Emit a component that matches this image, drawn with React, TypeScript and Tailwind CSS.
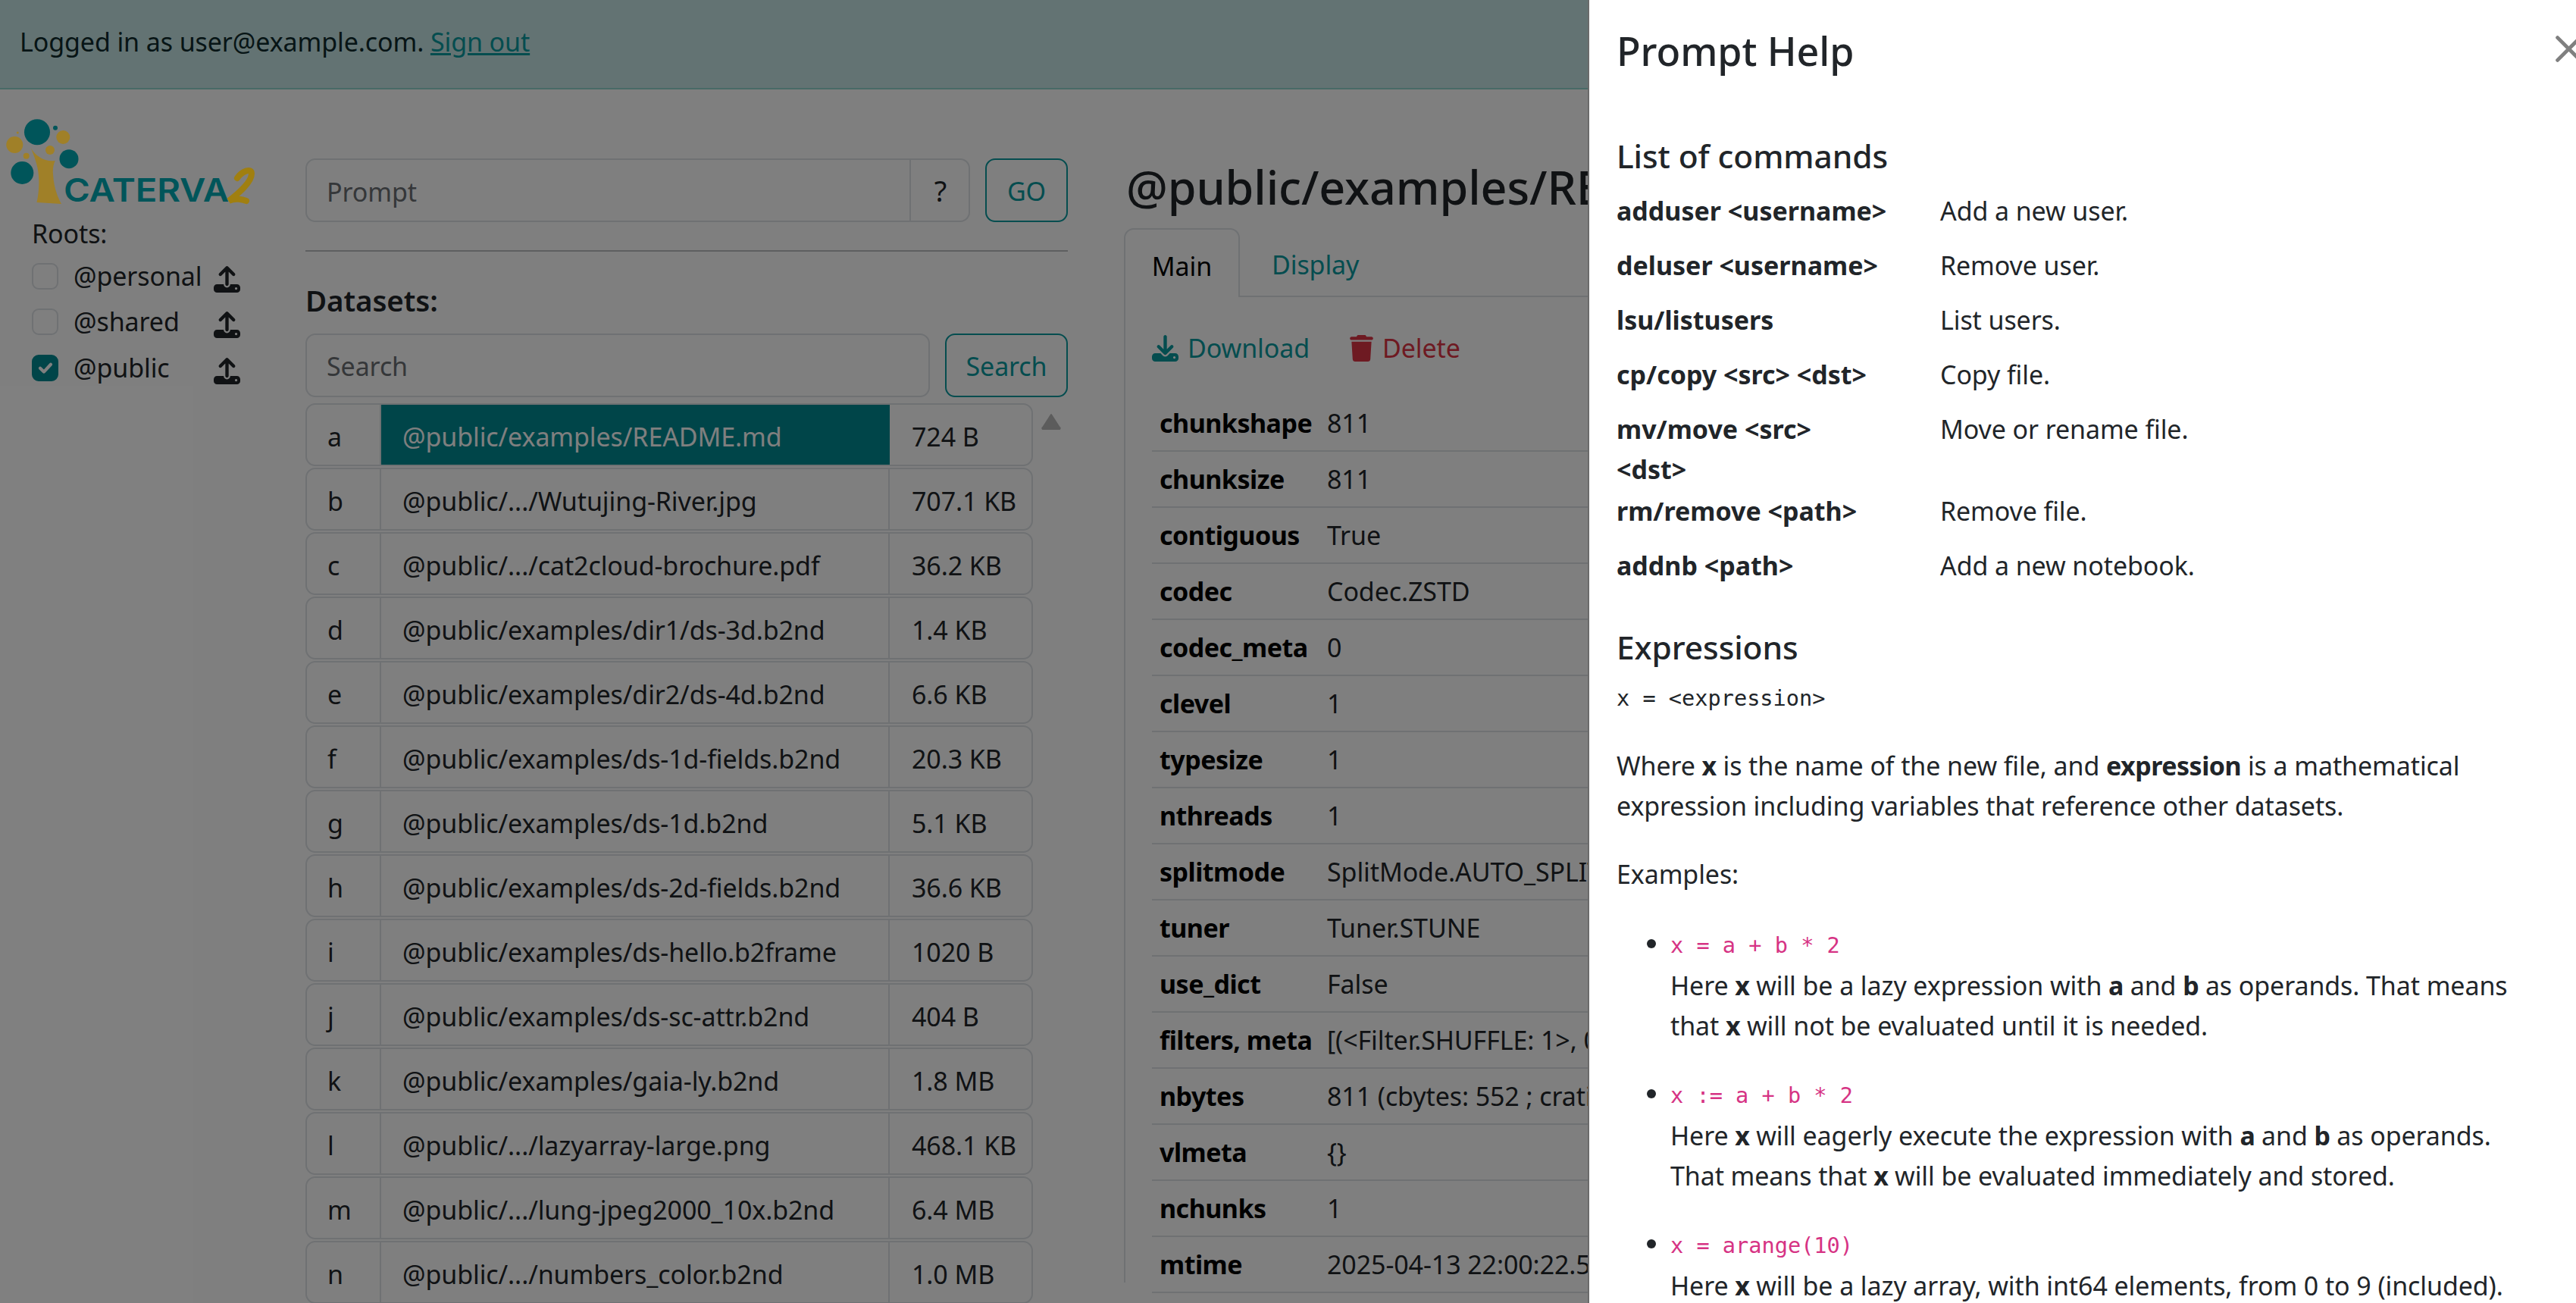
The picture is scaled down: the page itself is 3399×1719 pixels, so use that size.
import React from "react";
import { FaUpload, FaDownload, FaTrash } from "react-icons/fa6";

const rows: [string, string, string][] = [
  ["a", "@public/examples/README.md", "724 B"],
  ["b", "@public/.../Wutujing-River.jpg", "707.1 KB"],
  ["c", "@public/.../cat2cloud-brochure.pdf", "36.2 KB"],
  ["d", "@public/examples/dir1/ds-3d.b2nd", "1.4 KB"],
  ["e", "@public/examples/dir2/ds-4d.b2nd", "6.6 KB"],
  ["f", "@public/examples/ds-1d-fields.b2nd", "20.3 KB"],
  ["g", "@public/examples/ds-1d.b2nd", "5.1 KB"],
  ["h", "@public/examples/ds-2d-fields.b2nd", "36.6 KB"],
  ["i", "@public/examples/ds-hello.b2frame", "1020 B"],
  ["j", "@public/examples/ds-sc-attr.b2nd", "404 B"],
  ["k", "@public/examples/gaia-ly.b2nd", "1.8 MB"],
  ["l", "@public/.../lazyarray-large.png", "468.1 KB"],
  ["m", "@public/.../lung-jpeg2000_10x.b2nd", "6.4 MB"],
  ["n", "@public/.../numbers_color.b2nd", "1.0 MB"],
];

const meta: [string, string][] = [
  ["chunkshape", "811"],
  ["chunksize", "811"],
  ["contiguous", "True"],
  ["codec", "Codec.ZSTD"],
  ["codec_meta", "0"],
  ["clevel", "1"],
  ["typesize", "1"],
  ["nthreads", "1"],
  ["splitmode", "SplitMode.AUTO_SPLIT"],
  ["tuner", "Tuner.STUNE"],
  ["use_dict", "False"],
  ["filters, meta", "[(<Filter.SHUFFLE: 1>, 0)]"],
  ["nbytes", "811 (cbytes: 552 ; cratio: 1.47)"],
  ["vlmeta", "{}"],
  ["nchunks", "1"],
  ["mtime", "2025-04-13 22:00:22.5"],
];

const roots = [
  ["@personal", false],
  ["@shared", false],
  ["@public", true],
] as const;

const commands: [React.ReactNode, string][] = [
  ["adduser <username>", "Add a new user."],
  ["deluser <username>", "Remove user."],
  ["lsu/listusers", "List users."],
  ["cp/copy <src> <dst>", "Copy file."],
  [<>mv/move &lt;src&gt;<br />&lt;dst&gt;</>, "Move or rename file."],
  ["rm/remove <path>", "Remove file."],
  ["addnb <path>", "Add a new notebook."],
];

function Logo() {
  return (
    <svg viewBox="0 130 360 140" className="relative z-20 block h-[140px] w-[360px]">
      <circle cx="49" cy="172.3" r="17" fill="#00555a" />
      <circle cx="73" cy="166.7" r="3" fill="#00555a" />
      <circle cx="83.3" cy="179" r="9" fill="#a08028" />
      <circle cx="19.3" cy="189" r="11" fill="#a08028" />
      <circle cx="66" cy="196" r="6" fill="#a08028" />
      <circle cx="34.7" cy="203.7" r="4" fill="#a08028" />
      <circle cx="23.3" cy="173" r="1.5" fill="#a08028" />
      <circle cx="91" cy="207.7" r="12.5" fill="#00555a" />
      <circle cx="29.3" cy="226" r="15" fill="#00555a" />
      <path d="M40.7 193 C46 204 60 212 72.7 210 C70 216 69.5 222 70 228 C71 244 75 256 81 267 L48.5 265 C51 254 52 242 51 230 C50 216 45 204 40.7 193 Z" fill="#a08028" />
      <text x="84" y="264" textLength="218" lengthAdjust="spacingAndGlyphs" fontFamily="Inter, sans-serif" fontWeight="600" fontSize="42" fill="#00555a">CATERVA</text>
      <path d="M313 233 C319 224 332 219 332 227 C332 238 316 252 302 263 C310 259 320 261 325 263" fill="none" stroke="#a07f10" strokeWidth="8" strokeLinecap="round" />
    </svg>
  );
}

function Sidebar() {
  return (
    <div className="w-[403px] shrink-0">
      <div className="mt-[14px] -mb-[3px]"><Logo /></div>
      <div className="mt-[13px] pl-[42px]">Roots:</div>
      <div className="-mt-[1px] flex flex-col pl-[42px]">
        {roots.map(([name, on]) => (
          <div key={name} className="flex h-[60.5px] items-center">
            <span className={"flex h-[35px] w-[35px] shrink-0 items-center justify-center rounded-[9px] border-2 " + (on ? "border-[#008a92] bg-[#008a92]" : "border-[#dee2e6] bg-white")}>
              {on && (
                <svg viewBox="0 0 20 20" className="h-[28px] w-[28px]"><path d="M5 10.5l3.5 3.5L15 7" fill="none" stroke="#fff" strokeWidth="3" strokeLinecap="round" strokeLinejoin="round" /></svg>
              )}
            </span>
            <span className="ml-[20px] w-[185px]">{name}</span>
            <FaUpload className="mt-[8px] h-[35px] w-[35px] text-[#212529]" />
          </div>
        ))}
      </div>
    </div>
  );
}

function Middle() {
  return (
    <div className="w-[1006px] shrink-0 pt-[91px]">
      <div className="flex gap-[20px]">
        <div className="flex h-[84px] w-[877px] rounded-[13px] border-2 border-[#dee2e6] bg-white">
          <div className="flex flex-1 items-center pl-[26px] pt-[4px] text-[#6a6e73]">Prompt</div>
          <div className="flex w-[78px] items-center justify-center border-l-2 border-[#dee2e6] pl-[2px] text-[38px]">?</div>
        </div>
        <div className="flex h-[84px] w-[109px] items-center justify-center rounded-[13px] border-2 border-[#0a9a9f] pt-[3px] text-[#0a9a9f]">GO</div>
      </div>
      <div className="mt-[37px] h-[2px] bg-[#bcbec0]" />
      <div className="mt-[38px] text-[38.5px] font-semibold leading-[53px]">Datasets:</div>
      <div className="mt-[17px] flex gap-[20px]">
        <div className="flex h-[84px] w-[824px] items-center rounded-[13px] border-2 border-[#dee2e6] bg-white pl-[26px] pt-[3px] text-[#6a6e73]">Search</div>
        <div className="flex h-[84px] w-[162px] items-center justify-center rounded-[13px] border-2 border-[#0a9a9f] pt-[3px] text-[#0a9a9f]">Search</div>
      </div>
      <div className="relative mt-[8px] flex w-[960px] flex-col gap-[2px]">
        {rows.map(([k, name, size], i) => (
          <div key={k} className="flex h-[83px] shrink-0 overflow-hidden rounded-[13px] border-2 border-[#dee2e6] bg-white">
            <div className="flex w-[98px] items-center border-r-2 border-[#dee2e6] pl-[27px] pt-[6px]">{k}</div>
            <div className={"flex w-[671px] items-center pl-[28px] pt-[6px] " + (i === 0 ? "bg-[#008a92] text-white" : "border-r-2 border-[#dee2e6]")}>{name}</div>
            <div className="flex flex-1 items-center pl-[29px] pt-[6px]">{size}</div>
          </div>
        ))}
        <svg viewBox="0 0 26 22" className="absolute left-[971px] top-[13px] h-[22px] w-[26px]"><path d="M13 2L24 19a1 1 0 0 1-1 2H3a1 1 0 0 1-1-2Z" fill="#b8b8b8" stroke="#b8b8b8" strokeWidth="2" strokeLinejoin="round" /></svg>
      </div>
    </div>
  );
}

function Detail() {
  return (
    <div className="ml-[74px] w-[1000px] shrink-0 pt-[79px]">
      <div className="mb-[4px] pl-[3px] text-[61px] font-medium leading-[100px] whitespace-nowrap">@public/examples/README.md</div>
      <div className="flex h-[91px] border-b-2 border-[#dee2e6]">
        <div className="-mb-[2px] flex w-[153px] items-center justify-center rounded-t-[13px] border-2 border-b-0 border-[#dee2e6] bg-white pt-[8px] text-black">Main</div>
        <div className="flex items-center pl-[42px] pt-[8px] text-[#0a9a9f]">Display</div>
      </div>
      <div className="h-[1300px] border-l-2 border-[#dee2e6] pl-[35px]">
        <div className="flex h-[130px] items-center pt-[4px]">
          <FaDownload className="h-[35px] w-[35px] text-[#0a9a9f]" />
          <span className="ml-[12px] text-[#0a9a9f]">Download</span>
          <FaTrash className="ml-[53px] h-[35px] w-[31px] text-[#dc3545]" />
          <span className="ml-[12px] text-[#dc3545]">Delete</span>
        </div>
        {meta.map(([k, v]) => (
          <div key={k} className="flex h-[74px] items-center border-b-2 border-[#dee2e6] pl-[10px] text-[#212529]">
            <span className="w-[221px] font-bold tracking-[-0.5px] text-black">{k}</span>
            <span className="whitespace-nowrap">{v}</span>
          </div>
        ))}
      </div>
    </div>
  );
}

function B({ children }: { children: React.ReactNode }) {
  return <b className="font-bold tracking-[-0.5px]">{children}</b>;
}

function Code({ children, pink }: { children: React.ReactNode; pink?: boolean }) {
  return <code className={"font-['DejaVu_Sans_Mono',monospace] text-[28.6px] leading-none tracking-normal " + (pink ? "text-[#d63384]" : "")}>{children}</code>;
}

function Help() {
  return (
    <aside className="absolute right-0 top-0 z-30 h-full w-[1304px] overflow-hidden border-l-2 border-[#6b6b6b] bg-white pl-[36px] whitespace-nowrap">
      <div className="mt-[35px] text-[52px] font-medium leading-[64px]">Prompt Help</div>
      <svg viewBox="0 0 40 40" className="absolute left-[1275px] top-[47px] h-[35px] w-[35px]"><path d="M3 3L37 37M37 3L3 37" stroke="#7f7f7f" strokeWidth="5.5" strokeLinecap="round" fill="none" /></svg>
      <h2 className="mt-[80px] text-[42.5px] font-medium leading-[53px]">List of commands</h2>
      <div className="mt-[20px]">
        {commands.map(([c, d], i) => (
          <div key={i} className={"flex " + (i === 4 ? "pb-[2px]" : "")}>
            <div className="w-[427px] shrink-0 font-bold tracking-normal">{c}</div>
            <div className="pb-[19px]">{d}</div>
          </div>
        ))}
      </div>
      <h2 className="mt-[35px] text-[42.5px] font-medium leading-[53px]">Expressions</h2>
      <div className="mt-[12px]"><Code>x = &lt;expression&gt;</Code></div>
      <p className="mt-[39px]">
        Where <B>x</B> is the name of the new file, and <B>expression</B> is a mathematical<br />
        expression including variables that reference other datasets.
      </p>
      <p className="mt-[37px]">Examples:</p>
      <ul className="mt-[38px] list-disc pl-[71px]">
        <li className="mb-[36px]">
          <div className="mb-[3px]"><Code pink>x = a + b * 2</Code></div>
          Here <B>x</B> will be a lazy expression with <B>a</B> and <B>b</B> as operands. That means<br />
          that <B>x</B> will not be evaluated until it is needed.
        </li>
        <li className="mb-[36px]">
          <div className="mb-[3px]"><Code pink>x := a + b * 2</Code></div>
          Here <B>x</B> will eagerly execute the expression with <B>a</B> and <B>b</B> as operands.<br />
          That means that <B>x</B> will be evaluated immediately and stored.
        </li>
        <li>
          <div className="mb-[3px]"><Code pink>x = arange(10)</Code></div>
          Here <B>x</B> will be a lazy array, with int64 elements, from 0 to 9 (included).
        </li>
      </ul>
    </aside>
  );
}

export default function App() {
  return (
    <div className="relative h-[1719px] w-[3399px] overflow-hidden bg-white font-['Noto_Sans',sans-serif] text-[34px] leading-[53px] tracking-[-0.1px] text-[#212529]">
      <header className="flex h-[118px] items-center border-b-2 border-[#90d4cc] bg-[#c6e6e6] pb-[5px] pl-[26px]">
        <span className="text-[#0f2a2c]">Logged in as user@example.com.&nbsp;</span>
        <a className="text-[#0a9a9f] underline">Sign out</a>
      </header>
      <main className="flex">
        <Sidebar />
        <Middle />
        <Detail />
      </main>
      <div className="absolute inset-0 z-10 bg-black/50" />
      <Help />
    </div>
  );
}
